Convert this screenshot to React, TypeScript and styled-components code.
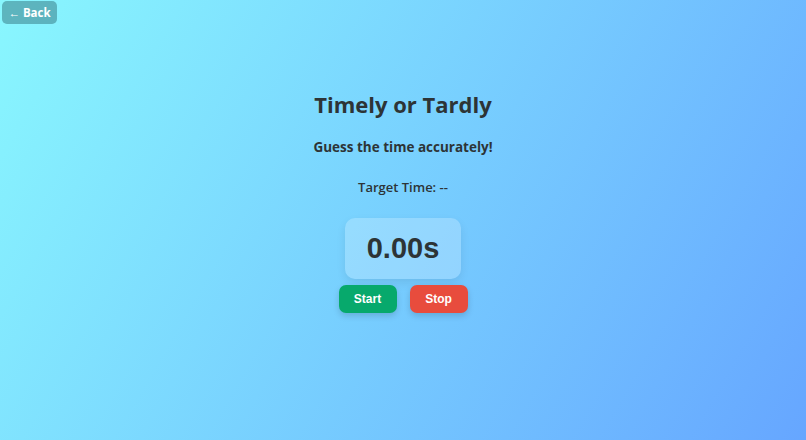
import React, { useEffect, useRef, useState } from 'react';
import styled, { createGlobalStyle } from 'styled-components';

const GlobalStyle = createGlobalStyle`
  html, body {
    margin: 0;
    padding: 0;
    height: 100%;
  }
  body {
    font-family: 'Open Sans', 'Noto Sans', sans-serif;
    background: linear-gradient(120deg, #89f7fe 0%, #66a6ff 100%);
    background-attachment: fixed;
    min-height: 100vh;
  }
`;

const Page = styled.div`
  position: relative;
  min-height: 100vh;
  display: flex;
  flex-direction: column;
  align-items: center;
  padding-top: 88px;
  box-sizing: border-box;
  color: #2d3436;
`;

const BackButton = styled.button`
  position: absolute;
  top: 1px;
  left: 2px;
  height: 23px;
  width: 55px;
  padding: 0;
  border: none;
  border-radius: 5px;
  background: rgba(50, 115, 125, 0.5);
  color: #ffffff;
  font-family: 'Open Sans', sans-serif;
  font-weight: 700;
  font-size: 11.5px;
  cursor: pointer;
`;

const Title = styled.h1`
  margin: 0;
  font-size: 22px;
  font-weight: 700;
  line-height: 32px;
`;

const Subtitle = styled.h2`
  margin: 17px 0 0;
  font-size: 13.5px;
  font-weight: 700;
  line-height: 20px;
`;

const Target = styled.p`
  margin: 20px 0 0;
  font-size: 13px;
  font-weight: 600;
  line-height: 20px;
`;

const TimerBox = styled.div`
  margin-top: 21px;
  width: 116px;
  height: 61px;
  display: flex;
  align-items: center;
  justify-content: center;
  border-radius: 10px;
  background: rgba(255, 255, 255, 0.22);
  box-shadow: 0 4px 10px rgba(0, 0, 0, 0.08);
  font-family: 'Liberation Sans', Arial, sans-serif;
  font-weight: 700;
  font-size: 29px;
  color: #2d3436;
`;

const Controls = styled.div`
  margin-top: 6px;
  display: flex;
  gap: 13px;
`;

const ActionButton = styled.button<{ $tone: 'go' | 'halt' }>`
  width: 58px;
  height: 28px;
  border: none;
  border-radius: 7px;
  background: ${p => (p.$tone === 'go' ? '#07a96c' : '#e84c3d')};
  color: #ffffff;
  font-family: 'Liberation Sans', Arial, sans-serif;
  font-weight: 700;
  font-size: 12px;
  box-shadow: 0 3px 6px rgba(0, 0, 0, 0.15);
  cursor: pointer;
`;

export default function App() {
  const [elapsed, setElapsed] = useState(0);
  const [running, setRunning] = useState(false);
  const startRef = useRef(0);

  useEffect(() => {
    if (!running) return;
    startRef.current = Date.now() - elapsed * 1000;
    const id = setInterval(() => setElapsed((Date.now() - startRef.current) / 1000), 10);
    return () => clearInterval(id);
  }, [running]);

  return (
    <>
      <GlobalStyle />
      <Page>
        <BackButton>← Back</BackButton>
        <Title>Timely or Tardly</Title>
        <Subtitle>Guess the time accurately!</Subtitle>
        <Target>Target Time: --</Target>
        <TimerBox>{elapsed.toFixed(2)}s</TimerBox>
        <Controls>
          <ActionButton $tone="go" onClick={() => setRunning(true)}>Start</ActionButton>
          <ActionButton $tone="halt" onClick={() => setRunning(false)}>Stop</ActionButton>
        </Controls>
      </Page>
    </>
  );
}
